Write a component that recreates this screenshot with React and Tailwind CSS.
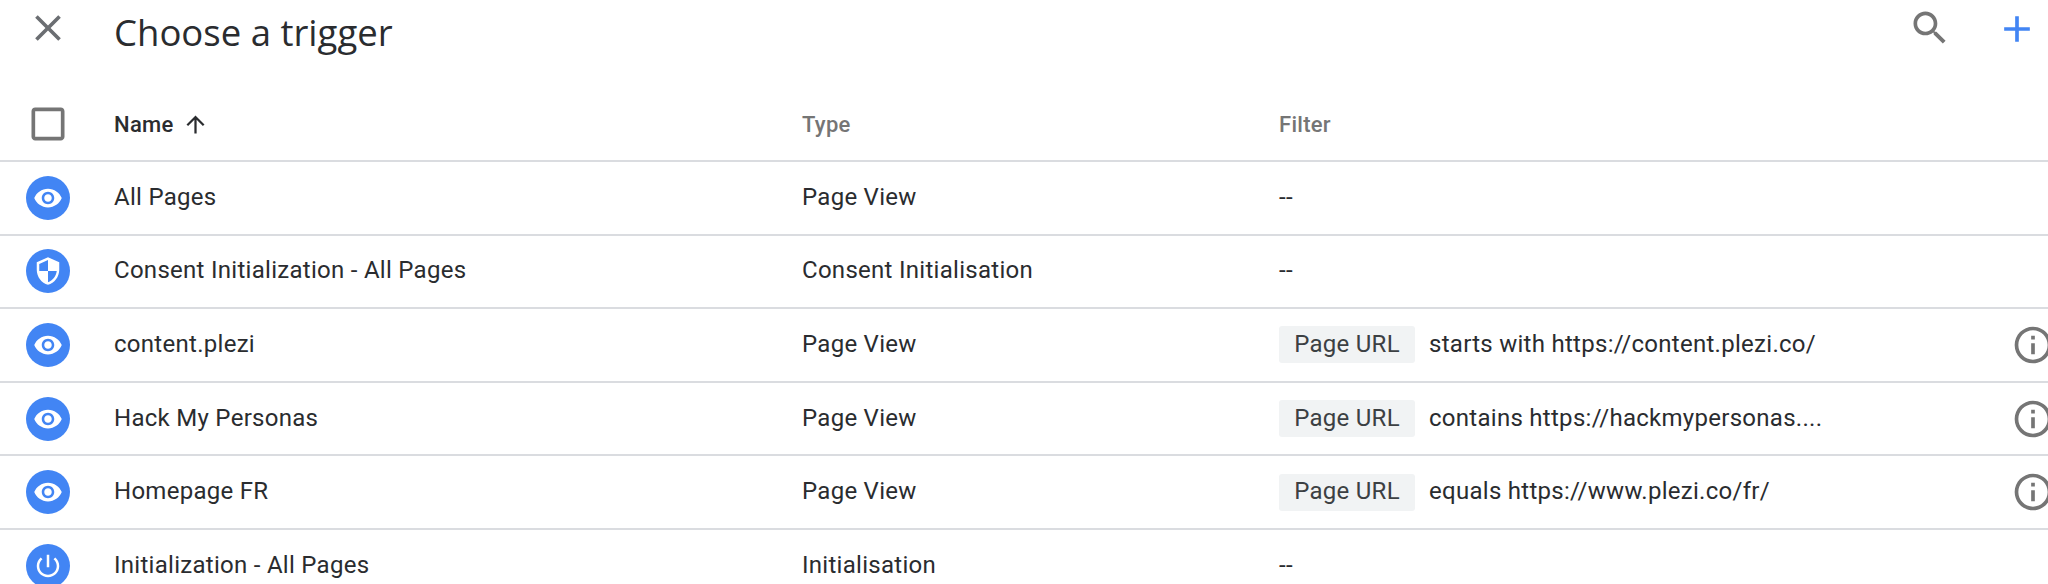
const paths = {
  close: 'M19 6.41L17.59 5 12 10.59 6.41 5 5 6.41 10.59 12 5 17.59 6.41 19 12 13.41 17.59 19 19 17.59 13.41 12z',
  search: 'M15.5 14h-.79l-.28-.27C15.41 12.59 16 11.11 16 9.5 16 5.91 13.09 3 9.5 3S3 5.91 3 9.5 5.91 16 9.5 16c1.61 0 3.09-.59 4.23-1.57l.27.28v.79l5 4.99L20.49 19l-4.99-5zm-6 0C7.01 14 5 11.99 5 9.5S7.01 5 9.5 5 14 7.01 14 9.5 11.99 14 9.5 14z',
  plus: 'M19 13h-6v6h-2v-6H5v-2h6V5h2v6h6v2z',
  checkbox: 'M19 5v14H5V5h14m0-2H5c-1.1 0-2 .9-2 2v14c0 1.1.9 2 2 2h14c1.1 0 2-.9 2-2V5c0-1.1-.9-2-2-2z',
  arrow: 'M4 12l1.41 1.41L11 7.83V20h2V7.83l5.58 5.59L20 12l-8-8-8 8z',
  eye: 'M12 4.5C7 4.5 2.73 7.61 1 12c1.73 4.39 6 7.5 11 7.5s9.27-3.11 11-7.5c-1.73-4.39-6-7.5-11-7.5zM12 17c-2.76 0-5-2.24-5-5s2.24-5 5-5 5 2.24 5 5-2.24 5-5 5zm0-8c-1.66 0-3 1.34-3 3s1.34 3 3 3 3-1.34 3-3-1.34-3-3-3z',
  shield: 'M12 1L3 5v6c0 5.55 3.84 10.74 9 12 5.16-1.26 9-6.45 9-12V5l-9-4zm0 10.99h7c-.53 4.12-3.28 7.79-7 8.94V12H5V6.3l7-3.11v8.8z',
  power: 'M13 3h-2v10h2V3zm4.83 2.17l-1.42 1.42C17.99 7.86 19 9.81 19 12c0 3.87-3.13 7-7 7s-7-3.13-7-7c0-2.19 1.01-4.14 2.58-5.42L6.17 5.17C4.23 6.82 3 9.26 3 12c0 4.97 4.03 9 9 9s9-4.03 9-9c0-2.74-1.23-5.18-3.17-6.83z',
  info: 'M11 7h2v2h-2zm0 4h2v6h-2zm1-9C6.48 2 2 6.48 2 12s4.48 10 10 10 10-4.48 10-10S17.52 2 12 2zm0 18c-4.41 0-8-3.59-8-8s3.59-8 8-8 8 3.59 8 8-3.59 8-8 8z',
};

function Icon({ name, className }) {
  return (
    <svg viewBox="0 0 24 24" fill="currentColor" className={className}>
      <path d={paths[name]} />
    </svg>
  );
}

const triggers = [
  { name: 'All Pages', type: 'Page View', icon: 'eye' },
  { name: 'Consent Initialization - All Pages', type: 'Consent Initialisation', icon: 'shield' },
  { name: 'content.plezi', type: 'Page View', icon: 'eye', filter: 'starts with https://content.plezi.co/' },
  { name: 'Hack My Personas', type: 'Page View', icon: 'eye', filter: 'contains https://hackmypersonas....' },
  { name: 'Homepage FR', type: 'Page View', icon: 'eye', filter: 'equals https://www.plezi.co/fr/' },
  { name: 'Initialization - All Pages', type: 'Initialisation', icon: 'power' },
];

export default function App() {
  return (
    <div className="h-[584px] w-[2048px] overflow-hidden bg-white font-['Roboto',sans-serif] text-[24px] tracking-[0.28px] text-[#2a2c2f]">
      {/* Top bar */}
      <div className="flex h-[64px] items-center">
        <div className="flex w-[114px] justify-center pr-[19px]">
          <Icon name="close" className="mt-[-8px] h-[44px] w-[44px] text-[#6b6e72]" />
        </div>
        <h1 className="font-['Open_Sans',sans-serif] text-[36.5px] tracking-normal">Choose a trigger</h1>
        <div className="ml-auto flex items-center">
          <Icon name="search" className="mt-[-8px] h-[44px] w-[44px] text-[#757575]" />
          <Icon name="plus" className="mt-[-6px] ml-[43px] h-[44px] w-[44px] text-[#4285f4]" />
          <div className="w-[9px]" />
        </div>
      </div>

      {/* Header */}
      <div className="flex h-[98px] items-center border-b-2 border-[#dadce0] pt-[24px]">
        <div className="flex w-[114px] justify-center pr-[19px]">
          <Icon name="checkbox" className="h-[44px] w-[44px] text-[#757575]" />
        </div>
        <div className="flex w-[688px] items-center gap-[8px] text-[22px] font-medium">
          Name
          <Icon name="arrow" className="h-[27px] w-[27px]" />
        </div>
        <div className="w-[477px] text-[22px] font-medium text-[#757575]">Type</div>
        <div className="text-[22px] font-medium text-[#757575]">Filter</div>
      </div>

      {/* Rows */}
      {triggers.map((t) => (
        <div key={t.name} className="flex h-[73.6px] items-center border-b-2 border-[#dadce0]">
          <div className="flex w-[114px] justify-center pr-[19px]">
            <div className="flex h-[44px] w-[44px] items-center justify-center rounded-full bg-[#4285f4] text-white">
              <Icon name={t.icon} className="h-[30px] w-[30px]" />
            </div>
          </div>
          <div className="w-[688px] pb-[2px]">{t.name}</div>
          <div className="w-[477px] pb-[2px]">{t.type}</div>
          {t.filter ? (
            <div className="flex flex-1 items-center">
              <span className="flex h-[37px] w-[136px] items-center justify-center rounded-[3px] bg-[#f1f3f4] pb-[2px] text-[#3c4043]">
                Page URL
              </span>
              <span className="ml-[14px] pb-[2px]">{t.filter}</span>
              <Icon name="info" className="ml-auto mr-[-7px] h-[44px] w-[44px] text-[#757575]" />
            </div>
          ) : (
            <div className="pb-[2px]">--</div>
          )}
        </div>
      ))}
    </div>
  );
}
